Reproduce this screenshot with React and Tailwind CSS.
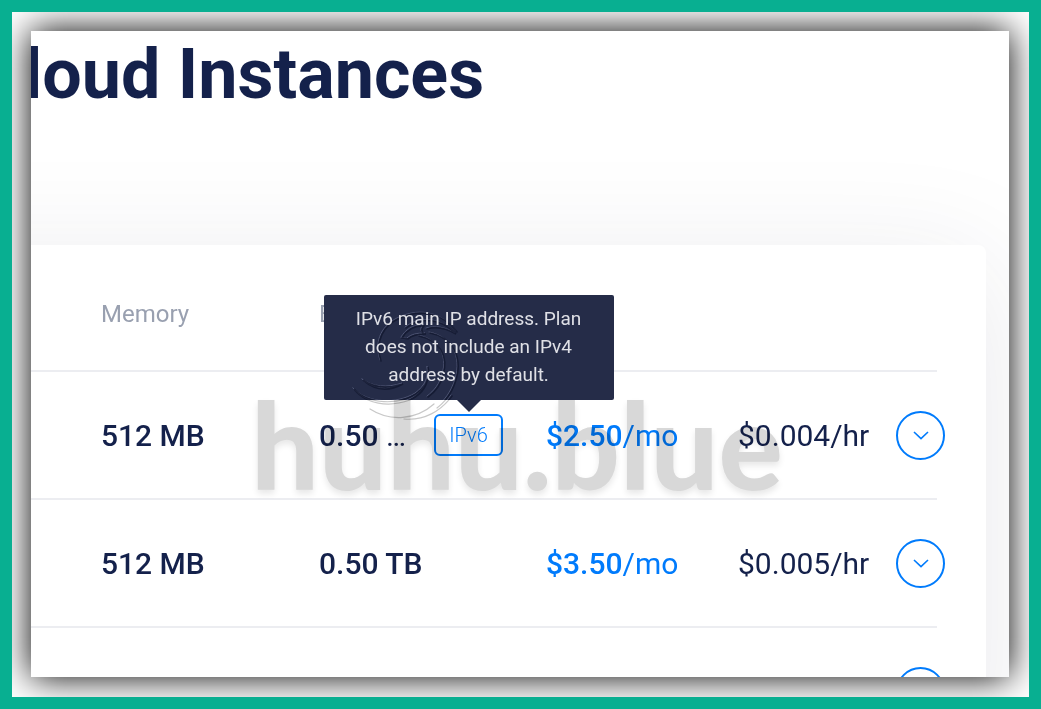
import React from "react";

const plans = [
  { id: "a", memory: "512 MB", bandwidth: "0.50", ipv6: true, monthly: "$2.50", hourly: "$0.004/hr" },
  { id: "b", memory: "512 MB", bandwidth: "0.50 TB", ipv6: false, monthly: "$3.50", hourly: "$0.005/hr" },
];

function ExpandButton() {
  return (
    <button
      type="button"
      aria-label="Show plan details"
      className="-mr-2 flex size-[49px] items-center justify-center rounded-full border-2 border-[#007bfc] text-[#007bfc]"
    >
      <svg viewBox="0 0 16 9" className="w-4" fill="none" stroke="currentColor" strokeWidth="1.6" aria-hidden="true">
        <path d="M1 1l7 6.600l7-6.600" />
      </svg>
    </button>
  );
}

function SwirlLines() {
  return (
    <>
      <path d="M41 60C34 40 44 24 60 17C82 7 104 13 117 31" />
      <path d="M62 37C66 30 74 24 84 25C80 29 82 33 86 33C78 33 72 34 68 38Z" />
      <path d="M66 27C82 14 104 19 116 33C106 27 96 25 87 28" />
      <path d="M79 35C99 39 109 55 103 74C101 83 95 91 88 96" />
      <path d="M90 32C112 36 123 56 116 79C112 92 105 101 97 107" />
      <path d="M23 79C34 87 48 88 63 83C48 91 34 89 23 79Z" />
      <path d="M14 88C29 104 58 104 76 93C86 86 90 76 88 66C90 84 82 93 70 99C48 107 26 103 14 88Z" />
      <path d="M30 108C50 121 76 119 94 103" />
      <path d="M64 118C84 120 101 110 112 95" />
    </>
  );
}

function Swirl() {
  return (
    <svg
      viewBox="0 0 140 125"
      className="absolute top-[6px] left-4 -z-10 w-[140px]"
      fill="none"
      strokeLinecap="round"
      aria-hidden="true"
    >
      <defs>
        <clipPath id="on-dark">
          <path d="M0 0h140v99H0z" />
        </clipPath>
        <clipPath id="on-light">
          <path d="M0 99h140v26H0z" />
        </clipPath>
      </defs>
      <g clipPath="url(#on-dark)">
        <g stroke="#6a7090" strokeWidth="1" opacity=".6" transform="translate(-1 -1)">
          <SwirlLines />
        </g>
        <g stroke="#10162d" strokeWidth="1.6" opacity=".75">
          <SwirlLines />
        </g>
      </g>
      <g clipPath="url(#on-light)" stroke="#777" strokeWidth="1.2" opacity=".4">
        <SwirlLines />
      </g>
    </svg>
  );
}

function Ipv6Badge() {
  return (
    <span className="relative">
      <button
        type="button"
        aria-describedby="ipv6-tip"
        className="block h-[42px] w-[69px] rounded-md border-2 border-[#007bfc] text-xl leading-9 font-light text-[#007bfc]"
      >
        IPv6
      </button>
      <span
        id="ipv6-tip"
        role="tooltip"
        className="absolute bottom-full left-1/2 isolate mb-[14px] w-[290px] -translate-x-1/2 rounded-xs bg-[#252c48] px-7 pt-[10px] pb-[11px] text-center text-[19px] leading-7 font-normal text-[#dfe0e6]"
      >
        <Swirl />
        IPv6 main IP address. Plan does not include an IPv4 address by default.
        <svg viewBox="0 0 24 12" className="absolute top-full left-1/2 w-6 -translate-x-1/2" fill="#252c48" aria-hidden="true">
          <path d="M0 0h24L12 12z" />
        </svg>
      </span>
    </span>
  );
}

export default function App() {
  return (
    <main className="flex h-screen overflow-hidden border-12 border-[#08af91] bg-white pt-[19px] pr-5 pb-5 pl-[19px] font-[Roboto,sans-serif] text-[#14214b]">
      <div className="relative flex-1 shadow-[0_0_34px_#000]">
        <div className="h-full overflow-hidden bg-white">
          <h1 className="-ml-[53px] pt-[2px] pb-[130px] text-[70px] leading-[82px] font-bold whitespace-nowrap">
            Cloud Instances
          </h1>
          <section className="mr-[23px] -ml-[200px] rounded-tr-lg bg-white pr-[49px] pl-[200px] shadow-[0_20px_120px_rgba(40,40,70,0.10)]">
            <table className="w-full table-fixed text-left">
              <colgroup>
                <col className="w-[288px]" />
                <col className="w-[227px]" />
                <col className="w-[192px]" />
                <col />
                <col className="w-[41px]" />
              </colgroup>
              <thead className="text-2xl text-[#99a0b0]">
                <tr className="h-[126px] border-b-2 border-[#ecedf1]">
                  <th className="pt-3 pl-[70px] font-normal">Memory</th>
                  <th className="pt-3 font-normal">Bandwidth</th>
                  <th colSpan="3" />
                </tr>
              </thead>
              <tbody className="text-[30px]">
                {plans.map((plan) => (
                  <tr key={plan.id} className="h-32 border-b-2 border-[#ecedf1]">
                    <td className="pl-[70px] font-medium">{plan.memory}</td>
                    <td className="font-medium">
                      {plan.ipv6 ? (
                        <span className="flex w-[184px] items-center justify-between">
                          <span>
                            {plan.bandwidth} <span className="font-normal">…</span>
                          </span>
                          <Ipv6Badge />
                        </span>
                      ) : (
                        plan.bandwidth
                      )}
                    </td>
                    <td className="text-[#007bfc]">
                      <span className="font-medium">{plan.monthly}</span>/mo
                    </td>
                    <td>{plan.hourly}</td>
                    <td>
                      <ExpandButton />
                    </td>
                  </tr>
                ))}
                <tr className="h-32">
                  <td colSpan="4" />
                  <td>
                    <ExpandButton />
                  </td>
                </tr>
              </tbody>
            </table>
          </section>
        </div>
        <div className="pointer-events-none absolute top-[343px] left-[220px] font-[Lato,sans-serif] text-[120px] leading-[140px] font-black text-[#d8d8d8] mix-blend-multiply [text-shadow:0_4px_6px_#00000018]">
          huhu.blue
        </div>
      </div>
    </main>
  );
}
